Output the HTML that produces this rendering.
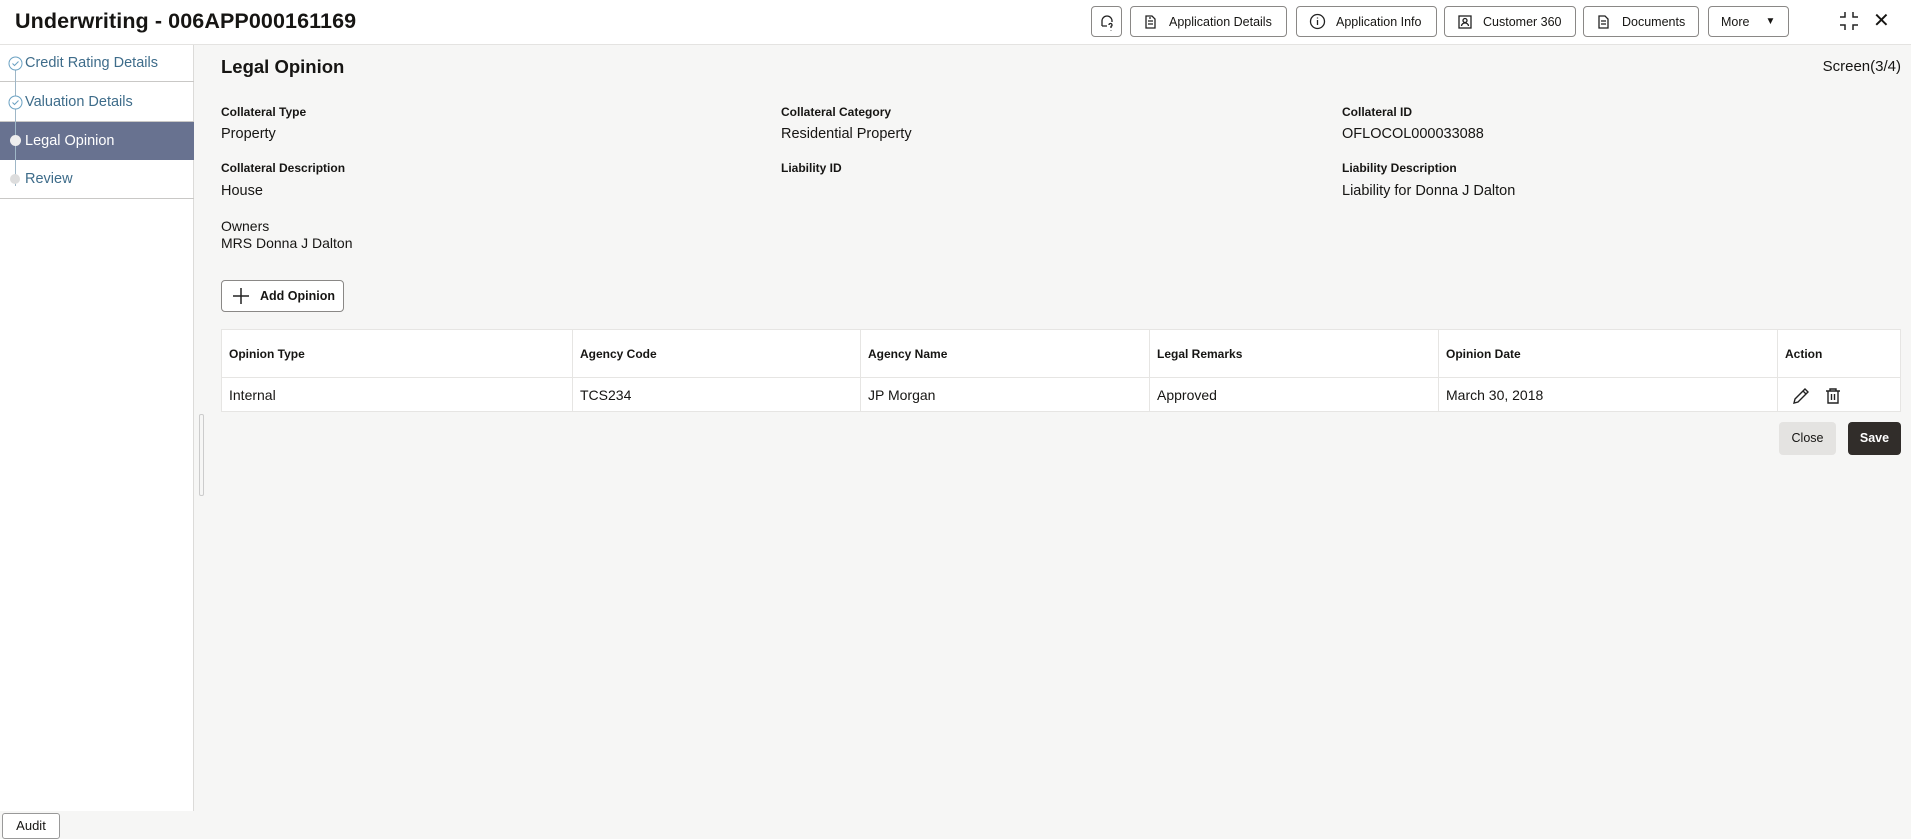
<!DOCTYPE html>
<html><head><meta charset="utf-8"><style>
*{box-sizing:border-box;margin:0;padding:0}
body{width:1911px;height:837px;overflow:hidden;font-family:"Liberation Sans",sans-serif;color:#161513;background:#f6f6f5;position:relative}
.abs{position:absolute}
.hdr{left:0;top:0;width:1911px;height:45px;background:#fff;border-bottom:1px solid #e4e3e1}
.title{left:15px;top:9px;font-size:21.5px;font-weight:bold;letter-spacing:0.1px}
.btn{position:absolute;top:6px;height:31px;border:1px solid #8a8886;border-radius:4px;background:#fff;font-size:12.5px;display:flex;align-items:center;padding-left:12px;gap:10px}
.side{left:0;top:45px;width:194px;height:766px;background:#fff;border-right:1px solid #dcdbd9}
.item{position:absolute;left:0;width:194px;border-bottom:1px solid #c9c8c6;font-size:14.5px;color:#3e6c8a;padding-left:25px;display:flex;align-items:center}
.lbl{position:absolute;font-size:12px;font-weight:bold;color:#161513}
.val{position:absolute;font-size:14.5px;color:#161513}
table{position:absolute;left:221px;top:329px;width:1680px;border-collapse:collapse;background:#fff;font-size:14px}
td,th{border:1px solid #e6e5e3;text-align:left;padding-left:7px}
th{height:48px;font-size:12px;font-weight:bold}
td{height:34px}
</style></head><body>
<div class="abs hdr"></div>
<div class="abs title">Underwriting - 006APP000161169</div>
<div class="btn" style="left:1091px;width:31px;padding-left:6px"><svg width="18" height="18" viewBox="0 0 18 18" fill="none" stroke="#222" stroke-width="1.3"><path d="M4 13V8a5 5 0 0 1 10 0v1M4 13h5M11 12a1.5 1.5 0 1 1 2 1.4V15M13 17v.5"/></svg></div>
<div class="btn" style="left:1130px;width:157px"><svg width="16" height="16" viewBox="0 0 16 16" fill="none" stroke="#222" stroke-width="1.3"><path d="M3 2h6l3 3v9H3zM5 7h5M5 10h5M6 4h2"/></svg>Application Details</div>
<div class="btn" style="left:1296px;width:141px"><svg width="17" height="17" viewBox="0 0 17 17" fill="none" stroke="#222" stroke-width="1.3"><circle cx="8.5" cy="8.5" r="7"/><path d="M8.5 7v5M8.5 4.5v1"/></svg>Application Info</div>
<div class="btn" style="left:1444px;width:132px"><svg width="16" height="16" viewBox="0 0 16 16" fill="none" stroke="#222" stroke-width="1.3"><rect x="2" y="2" width="12" height="12"/><circle cx="8" cy="6.5" r="2"/><path d="M4.5 12a3.5 3 0 0 1 7 0"/></svg>Customer 360</div>
<div class="btn" style="left:1583px;width:116px"><svg width="16" height="16" viewBox="0 0 16 16" fill="none" stroke="#222" stroke-width="1.3"><path d="M3 2h6l3 3v9H3zM5 7h5M5 10h5"/></svg>Documents</div>
<div class="btn" style="left:1708px;width:81px">More <span style="font-size:10px;margin-left:6px">▼</span></div>
<svg class="abs" style="left:1838px;top:10px" width="22" height="22" viewBox="0 0 22 22" fill="none" stroke="#222" stroke-width="1.5"><path d="M7 2v5H2M15 2v5h5M7 20v-5H2M15 20v-5h5"/></svg>
<div class="abs" style="left:1873px;top:8px;font-size:20px">✕</div>

<div class="abs side"></div>
<div class="item" style="top:45px;height:37px">Credit Rating Details</div>
<div class="item" style="top:82px;height:40px">Valuation Details</div>
<div class="item" style="top:122px;height:38px;background:#687290;color:#fff;border-bottom:none">Legal Opinion</div>
<div class="item" style="top:160px;height:39px">Review</div>
<div class="abs" style="left:15px;top:66px;width:1px;height:120px;background:#9fb7c7"></div>
<svg class="abs" style="left:8px;top:56px" width="15" height="15"><circle cx="7.5" cy="7.5" r="6.5" fill="#fff" stroke="#6aa1c2"/><path d="M4.5 7.5l2 2 4-4" fill="none" stroke="#6aa1c2"/></svg>
<svg class="abs" style="left:8px;top:95px" width="15" height="15"><circle cx="7.5" cy="7.5" r="6.5" fill="#fff" stroke="#6aa1c2"/><path d="M4.5 7.5l2 2 4-4" fill="none" stroke="#6aa1c2"/></svg>
<div class="abs" style="left:10px;top:135px;width:11px;height:11px;border-radius:50%;background:#eee"></div>
<div class="abs" style="left:10px;top:174px;width:10px;height:10px;border-radius:50%;background:#ddd"></div>
<div class="abs" style="left:2px;top:813px;width:58px;height:26px;border:1px solid #999;border-radius:3px;background:#fff;font-size:13px;text-align:center;line-height:24px">Audit</div>
<div class="abs" style="left:199px;top:414px;width:5px;height:82px;border:1px solid #ccc;border-radius:2px"></div>

<div class="abs" style="left:221px;top:56px;font-size:18.5px;font-weight:bold">Legal Opinion</div>
<div class="abs" style="right:10px;top:58px;font-size:15px">Screen(3/4)</div>
<div class="lbl" style="left:221px;top:105px">Collateral Type</div><div class="val" style="left:221px;top:126px">Property</div>
<div class="lbl" style="left:781px;top:105px">Collateral Category</div><div class="val" style="left:781px;top:126px">Residential Property</div>
<div class="lbl" style="left:1342px;top:105px">Collateral ID</div><div class="val" style="left:1342px;top:126px">OFLOCOL000033088</div>
<div class="lbl" style="left:221px;top:161px">Collateral Description</div><div class="val" style="left:221px;top:183px">House</div>
<div class="lbl" style="left:781px;top:161px">Liability ID</div>
<div class="lbl" style="left:1342px;top:161px">Liability Description</div><div class="val" style="left:1342px;top:183px">Liability for Donna J Dalton</div>
<div class="val" style="left:221px;top:218px;font-size:14px">Owners</div><div class="val" style="left:221px;top:235px;font-size:14px">MRS Donna J Dalton</div>
<div class="abs" style="left:221px;top:280px;width:123px;height:32px;border:1px solid #8a8886;border-radius:4px;background:#fff;font-size:12.5px;font-weight:bold;display:flex;align-items:center;padding-left:10px;gap:10px"><svg width="18" height="18" stroke="#222" stroke-width="1.5"><path d="M9 1v16M1 9h16"/></svg>Add Opinion</div>
<table>
<tr><th style="width:351px">Opinion Type</th><th style="width:288px">Agency Code</th><th style="width:289px">Agency Name</th><th style="width:289px">Legal Remarks</th><th style="width:339px">Opinion Date</th><th>Action</th></tr>
<tr><td>Internal</td><td>TCS234</td><td>JP Morgan</td><td>Approved</td><td>March 30, 2018</td><td>
<svg width="20" height="20" viewBox="0 0 20 20" fill="none" stroke="#222" stroke-width="1.4" style="margin:5px 0 0 6px"><path d="M3 17l1-4L14 3l3 3L7 16zM12 5l3 3"/></svg>
<svg width="20" height="20" viewBox="0 0 20 20" fill="none" stroke="#222" stroke-width="1.4" style="margin-left:8px"><path d="M3 5h14M7 5V3h6v2M5 5v12h10V5M8.5 8v6M11.5 8v6"/></svg></td></tr>
</table>
<div class="abs" style="left:1779px;top:422px;width:57px;height:33px;background:#e4e3e1;border-radius:4px;font-size:12.5px;text-align:center;line-height:33px">Close</div>
<div class="abs" style="left:1848px;top:422px;width:53px;height:33px;background:#312d2a;color:#fff;border-radius:4px;font-size:12.5px;font-weight:bold;text-align:center;line-height:33px">Save</div>
</body></html>
